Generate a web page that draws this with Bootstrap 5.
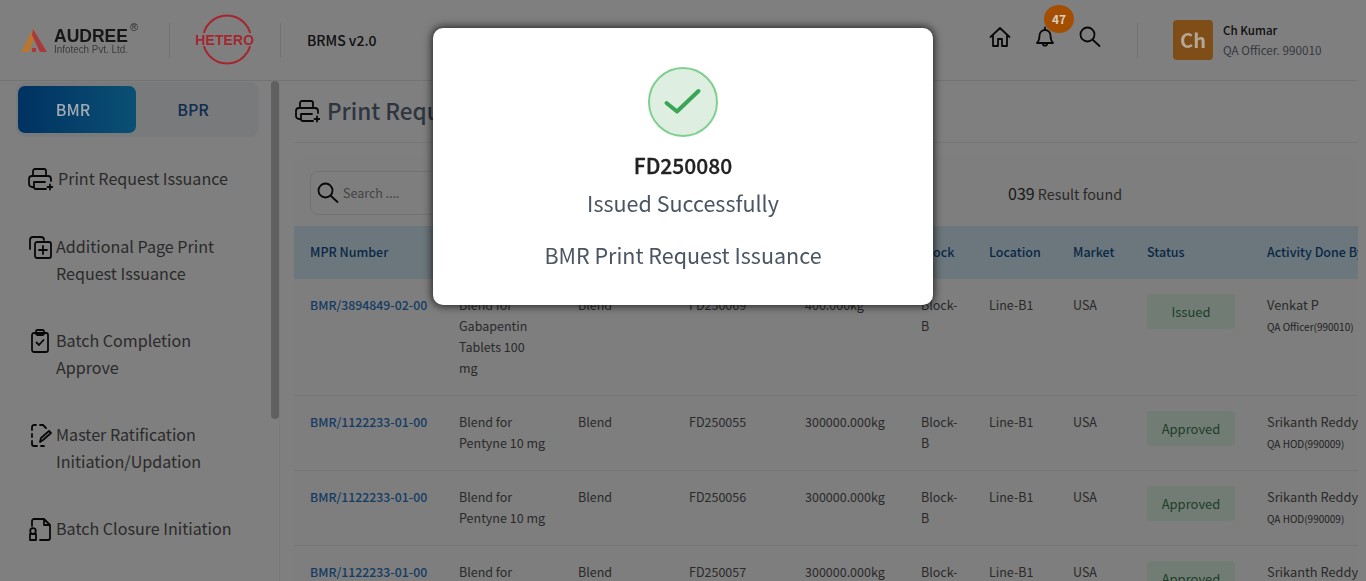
<!DOCTYPE html>
<html lang="en">
<head>
<meta charset="UTF-8">
<meta name="viewport" content="width=device-width, initial-scale=1.0">
<title>BRMS v2.0</title>
<link href="https://cdn.jsdelivr.net/npm/bootstrap@5.3.0/dist/css/bootstrap.min.css" rel="stylesheet">
<style>
  html, body { height: 100%; overflow: hidden; }
  body { font-family: "Noto Sans CJK SC", "Noto Sans", sans-serif; background: #fff; color: #444; font-size: 14px; }
  svg.ico { fill: none; stroke: #111; stroke-width: 1.8; stroke-linecap: round; stroke-linejoin: round; flex-shrink: 0; }
  /* these parts stay brighter than the backdrop in the picture */
  .over-dim { position: relative; z-index: 1051; }

  .top-bar { height: 81px; border-bottom: 1px solid #e4e8e8; margin-right: 8px; padding-left: 20px; }
  .logo-one { width: 120px; margin-right: 29px; }
  .logo-two { margin: 0 24px; }
  .v-line { width: 1px; height: 35px; background: #e2e2e2; }
  .app-name { margin-left: 26px; font-size: 14px; font-weight: 500; color: #222; }
  .top-icons { gap: 21px; margin: 0 35px 6px 0; }
  .bell-wrap { position: relative; width: 24px; height: 24px; }
  .bell-count { position: absolute; z-index: 1051; left: 11px; top: -20px; width: 30px; height: 28px; border-radius: 50%; background: #a34e00; color: #d8cdc0; font-size: 12px; font-weight: 700; line-height: 27px; text-align: center; }
  .avatar { width: 40px; height: 40px; margin: 0 10px 0 35px; background: #ff9a30; border-radius: 4px; font-size: 20px; font-weight: 700; line-height: 40px; text-align: center; }
  .avatar span { color: #b5a696; }
  .user-box { margin-right: 37px; width: 98px; white-space: nowrap; }
  .user-name { font-size: 11.6px; font-weight: 500; color: #222; line-height: 20px; }
  .user-role { font-size: 11.7px; color: #6b7280; line-height: 20px; }

  .page-wrap { height: 500px; }
  .side-col { width: 280px; flex-shrink: 0; border-right: 1px solid #f4f4f4; position: relative; overflow: hidden; padding-left: 16px; }
  .side-thumb { position: absolute; left: 271px; top: 0; width: 8px; height: 338px; border-radius: 4px; background: #c0c0c0; }
  .tab-box { width: 243px; height: 55px; margin-top: 1px; padding: 4px 2px; background: #f3f5f9; border-radius: 9px; }
  .tab-on, .tab-off { font-size: 16px; font-weight: 500; line-height: 47px; text-align: center; border-radius: 7px; }
  .tab-on { width: 118px; padding-right: 8px; background: linear-gradient(90deg, #0064c4, #16a0e8); }
  .tab-on span { color: #a0aab4; }
  .tab-off { width: 114px; color: #1f5a9c; }
  .side-menu { padding-left: 11px; margin-top: 28px; }
  .side-item { display: flex; gap: 3px; font-size: 16.1px; line-height: 27px; color: #555; margin-bottom: 40px; }
  .side-item:first-child { margin-bottom: 41px; }
  .side-item:first-child span { margin-left: 2px; }
  .side-item svg { margin-top: 1px; }

  .main-col { flex: 1 1 0; min-width: 0; padding: 0 8px 0 14px; background: #fefefe; overflow: hidden; }
  .page-title { height: 62px; padding-bottom: 2px; border-bottom: 1px solid #ececec; gap: 7px; font-size: 22.5px; font-weight: 500; color: #5c6b80; }
  .list-card { margin-top: 14px; background: #fcfcfc; border-radius: 10px 0 0 0; overflow: hidden; }
  .tool-row { height: 69px; padding: 3px 0 0 16px; }
  .search-box { width: 300px; height: 44px; border: 1px solid #e4e4e4; border-radius: 8px; padding-left: 5px; gap: 3px; color: #888; font-size: 12.5px; }
  .result-txt { margin-left: 398px; font-size: 14.3px; color: #555; }
  .result-txt b { font-size: 16px; font-weight: 400; color: #333; }

  .grid-tbl { table-layout: fixed; width: 1200px; margin: 0; font-size: 12.5px; }
  .grid-tbl th { background: #d7eef8; color: #14508c; font-weight: 500; height: 53px; vertical-align: middle; white-space: nowrap; padding: 0 16px; border: 0; }
  .grid-tbl td { background: transparent; color: #555; padding: 15px 16px 17px; line-height: 21px; border-bottom: 1px solid #ececec; vertical-align: top; }
  .grid-tbl td a { color: #2a78c8; font-weight: 500; font-size: 12.3px; text-decoration: none; white-space: nowrap; }
  .state-pill { display: block; width: 88px; height: 35px; margin-right: -20px; font-size: 13px; line-height: 35px; text-align: center; background: #e3fbe9; color: #3f7a52; border-radius: 4px; }
  .doer { white-space: nowrap; font-size: 12.8px; }
  .doer small { display: block; margin: 1px 0 -1px; font-size: 10px; line-height: 21px; color: #444; }

  .modal-content.done-box { height: 277px; border: 0; border-radius: 10px; box-shadow: 0 0 9px 1px rgba(0,0,0,.75); align-items: center; padding-top: 39px; text-align: center; }
  .done-ring { width: 70px; height: 70px; border-radius: 50%; border: 2px solid #7fd08f; background: #deefe2; }
  .done-id { margin-top: 12px; font-size: 21px; font-weight: 500; -webkit-text-stroke: .3px #222; line-height: 33px; color: #222; }
  .done-txt { margin-top: 4px; font-size: 21.5px; line-height: 33px; color: #4b5563; }
  .done-sub { margin-top: 19px; }
</style>
</head>
<body>

  <header class="top-bar d-flex align-items-center">
    <svg class="logo-one over-dim" height="40" viewBox="0 0 120 40">
      <polygon points="1,32 13,9 16,15 9,32" fill="#b8762e"/>
      <polygon points="13,9 27,32 20,32 12,15" fill="#a83a3c"/>
      <rect x="12" y="28" width="4" height="4" fill="#a83a3c"/>
      <text x="34" y="22" font-size="19" font-weight="700" fill="#161616" font-family="Liberation Sans, sans-serif" textLength="74" lengthAdjust="spacingAndGlyphs">AUDREE</text>
      <text x="34" y="32.500" font-size="10" fill="#3c3c3c" font-family="Liberation Sans, sans-serif" textLength="74" lengthAdjust="spacingAndGlyphs">Infotech Pvt. Ltd.</text>
      <text x="110" y="11" font-size="11" fill="#2a2a2a" font-family="Liberation Sans, sans-serif">®</text>
    </svg>
    <div class="v-line"></div>
    <svg class="logo-two over-dim" width="62" height="54" viewBox="0 0 62 54">
      <circle cx="33" cy="26.500" r="24" fill="none" stroke="#a5262e" stroke-width="2"/>
      <rect x="1" y="20" width="60" height="13" fill="#808080"/>
      <text x="1" y="32" font-size="14.500" font-weight="700" fill="#a5262e" font-family="Liberation Sans, sans-serif" textLength="59" lengthAdjust="spacingAndGlyphs">HETERO</text>
    </svg>
    <div class="v-line"></div>
    <div class="app-name">BRMS v2.0</div>

    <div class="top-icons d-flex align-items-center ms-auto">
      <svg class="ico" width="24" height="24" viewBox="0 0 24 24"><path d="M2.500 12 12 3l9.500 9M5 10v11h5v-7h4v7h5V10"/></svg>
      <div class="bell-wrap">
        <svg class="ico" width="24" height="24" viewBox="0 0 24 24"><path d="M12 5a5.500 5.500 0 0 0-5.500 5.500c0 4-1.500 6.500-2.500 7.500h16c-1-1-2.500-3.500-2.500-7.500A5.500 5.500 0 0 0 12 5zM12 2.500V5M9.800 18.500a2.200 2.200 0 0 0 4.400 0"/></svg>
        <span class="bell-count">47</span>
      </div>
      <svg class="ico" width="24" height="24" viewBox="0 0 24 24"><circle cx="9.500" cy="9.500" r="7"/><path d="m15 15 6.500 6"/></svg>
    </div>
    <div class="v-line"></div>
    <div class="avatar"><span class="over-dim">Ch</span></div>
    <div class="user-box">
      <div class="user-name">Ch Kumar</div>
      <div class="user-role">QA Officer. 990010</div>
    </div>
  </header>

  <div class="page-wrap d-flex">
    <aside class="side-col">
      <div class="side-thumb"></div>
      <div class="tab-box d-flex">
        <div class="tab-on"><span class="over-dim">BMR</span></div>
        <div class="tab-off">BPR</div>
      </div>
      <nav class="side-menu">
        <div class="side-item"><svg class="ico" width="26" height="26" viewBox="0 0 26 26"><path d="M6 10V5a2 2 0 0 1 2-2h9a2 2 0 0 1 2 2v5M7 21H5a3 3 0 0 1-3-3v-5a3 3 0 0 1 3-3h16a3 3 0 0 1 3 3v2M7 16h11M7 16v5a2 2 0 0 0 2 2h10M23 18.500v5M20.500 21h5"/></svg><span>Print Request Issuance</span></div>
        <div class="side-item"><svg class="ico" width="26" height="26" viewBox="0 0 26 26"><path d="M3 15V6a3 3 0 0 1 3-3h8a3 3 0 0 1 3 3M16 12v8M12 16h8"/><rect x="8" y="8" width="16" height="16" rx="2"/></svg><span>Additional Page Print<br>Request Issuance</span></div>
        <div class="side-item"><svg class="ico" width="26" height="26" viewBox="0 0 26 26"><rect x="5" y="5" width="16" height="19" rx="2"/><rect x="9" y="2" width="8" height="5" rx="1.500"/><path d="m9.500 14.500 2.500 2.500 4.500-5"/></svg><span>Batch Completion<br>Approve</span></div>
        <div class="side-item"><svg class="ico" width="26" height="26" viewBox="0 0 26 26"><path d="M5 8V5a2 2 0 0 1 2-2h2M13 3h3l3 3M5 12v3M5 19v3a2 2 0 0 0 2 2h3M14 24h3M13 20l1-4 8-7 2 2-8 7-3 2z"/></svg><span>Master Ratification<br>Initiation/Updation</span></div>
        <div class="side-item"><svg class="ico" width="26" height="26" viewBox="0 0 26 26"><path d="M5 10V5a2 2 0 0 1 2-2h10l6 6v13a2 2 0 0 1-2 2h-8M17 3v6h6"/><circle cx="6" cy="15" r="2.800"/><rect x="3" y="18" width="6" height="6"/></svg><span>Batch Closure Initiation</span></div>
      </nav>
    </aside>

    <main class="main-col">
      <div class="page-title d-flex align-items-center">
        <svg class="ico" width="26" height="26" viewBox="0 0 26 26"><path d="M6 10V5a2 2 0 0 1 2-2h9a2 2 0 0 1 2 2v5M7 21H5a3 3 0 0 1-3-3v-5a3 3 0 0 1 3-3h16a3 3 0 0 1 3 3v2M7 16h11M7 16v5a2 2 0 0 0 2 2h10M23 18.500v5M20.500 21h5"/></svg>
        <span>Print Request Issuance</span>
      </div>
      <section class="list-card">
        <div class="tool-row d-flex align-items-center">
          <div class="search-box d-flex align-items-center">
            <svg class="ico" width="24" height="24" viewBox="0 0 24 24"><circle cx="9.500" cy="9.500" r="7"/><path d="m15 15 6.500 6"/></svg>
            <span>Search ....</span>
          </div>
          <div class="result-txt"><b>039</b> Result found</div>
        </div>
        <table class="table grid-tbl">
          <colgroup><col style="width:149px"><col style="width:119px"><col style="width:111px"><col style="width:116px"><col style="width:116px"><col style="width:68px"><col style="width:84px"><col style="width:74px"><col style="width:120px"><col style="width:243px"></colgroup>
          <thead>
            <tr><th>MPR Number</th><th>Product</th><th>Stage</th><th>Batch No</th><th>Batch Size</th><th>Block</th><th>Location</th><th>Market</th><th>Status</th><th>Activity Done By</th></tr>
          </thead>
          <tbody id="rowsHere"></tbody>
        </table>
      </section>
    </main>
  </div>

  <div class="modal-backdrop show"></div>
  <div class="modal d-block" tabindex="-1">
    <div class="modal-dialog">
      <div class="modal-content done-box">
        <div class="done-ring d-flex align-items-center justify-content-center">
          <svg width="40" height="32" viewBox="0 0 40 32"><path d="M3.500 17 14 25.500 35.500 5" fill="none" stroke="#3aa655" stroke-width="4" stroke-linecap="round" stroke-linejoin="round"/></svg>
        </div>
        <div class="done-id">FD250080</div>
        <div class="done-txt">Issued Successfully</div>
        <div class="done-txt done-sub">BMR Print Request Issuance</div>
      </div>
    </div>
  </div>

  <script src="https://cdn.jsdelivr.net/npm/bootstrap@5.3.0/dist/js/bootstrap.bundle.min.js"></script>
  <script>
    // table rows
    const rows = [
      ["BMR/3894849-02-00", "Blend for Gabapentin Tablets 100 mg", "FD250069", "400.000kg", "Issued", "Venkat P", "QA Officer(990010)"],
      ["BMR/1122233-01-00", "Blend for Pentyne 10 mg", "FD250055", "300000.000kg", "Approved", "Srikanth Reddy", "QA HOD(990009)"],
      ["BMR/1122233-01-00", "Blend for Pentyne 10 mg", "FD250056", "300000.000kg", "Approved", "Srikanth Reddy", "QA HOD(990009)"],
      ["BMR/1122233-01-00", "Blend for Pentyne 10 mg", "FD250057", "300000.000kg", "Approved", "Srikanth Reddy", "QA HOD(990009)"]
    ];
    document.getElementById("rowsHere").innerHTML = rows.map(r => `
      <tr>
        <td><a href="#">${r[0]}</a></td>
        <td>${r[1]}</td>
        <td>Blend</td>
        <td>${r[2]}</td>
        <td>${r[3]}</td>
        <td>Block-B</td>
        <td>Line-B1</td>
        <td>USA</td>
        <td><span class="state-pill">${r[4]}</span></td>
        <td class="doer">${r[5]}<small>${r[6]}</small></td>
      </tr>`).join("");
  </script>
</body>
</html>
